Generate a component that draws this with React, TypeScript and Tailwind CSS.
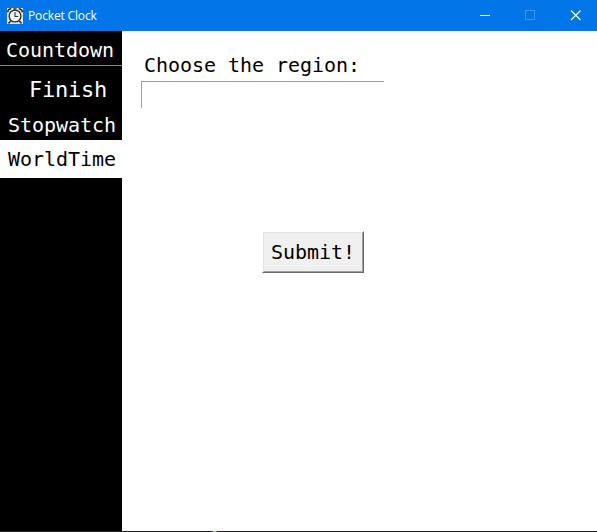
const mono = "font-['DejaVu_Sans_Mono',monospace] text-[20px] tracking-[-0.04px] whitespace-pre";

function ClockIcon() {
  return (
    <svg width="16" height="16" viewBox="0 0 16 16" className="shrink-0">
      <rect width="16" height="16" fill="#e4e4e4" />
      <circle cx="8" cy="8" r="5.9" fill="#f4f4f4" stroke="#2a2a2a" strokeWidth="1.3" />
      <path d="M.7 4.2Q.8 1 4.2.8M11.8.8Q15.2 1 15.3 4.2" fill="none" stroke="#2a2a2a" strokeWidth="1.6" />
      <path d="M6.5 1h3M3.7 13 1.5 15.5M12.3 13l2.2 2.5" stroke="#2a2a2a" strokeWidth="1.5" />
      <path d="M8 4v4.5h3.2" fill="none" stroke="#333" strokeWidth="1.1" />
    </svg>
  );
}

function TitleBar() {
  return (
    <header className="flex h-[31px] shrink-0 items-center bg-[#0275e8] pl-[7px] text-white">
      <ClockIcon />
      <span className="ml-[5px] grow font-['Open_Sans',sans-serif] text-[12px] leading-[16px] tracking-[-0.15px]">
        Pocket Clock
      </span>
      <svg width="130" height="31" viewBox="467 0 130 31" fill="none">
        <path d="M480 15.5h10" stroke="#fff" />
        <rect x="525.5" y="10.5" width="9" height="9" stroke="#3a93ee" />
        <path d="M571 10.5l9.5 9.5M580.5 10.5l-9.5 9.5" stroke="#fff" strokeWidth="1.1" />
      </svg>
    </header>
  );
}

export default function App() {
  return (
    <div className="flex h-[532px] w-[597px] flex-col overflow-hidden bg-white text-black">
      <TitleBar />
      <div className="flex grow">
        <nav className={`flex w-[122px] shrink-0 flex-col bg-black text-white ${mono}`}>
          <div className="h-[35px] border-b border-[#8a8a8a] pl-[6px] leading-[38px]">Countdown</div>
          <div className="h-[42px] pl-[29px] text-[22px] leading-[47px] tracking-[-0.25px]">Finish</div>
          <div className="h-[32px] pl-[8px] leading-[34px]">Stopwatch</div>
          <div className="h-[38px] bg-white pl-[8px] leading-[38px] text-black">WorldTime</div>
        </nav>
        <main className="flex grow flex-col pt-[20px] pl-[19px]">
          <label className={`block h-[30px] pl-[3px] leading-[28px] ${mono}`}>Choose the region:</label>
          <input aria-label="Region" className="block h-[27px] w-[243px] border-t border-l border-[#a0a0a0] outline-none" />
          <button className={`mt-[123px] ml-[121px] flex h-[42px] w-[102px] items-center border border-t-white border-r-[#696969] border-b-[#696969] border-l-white ${mono}`}>
            <span className="flex h-[40px] w-[100px] items-center border border-t-[#e3e3e3] border-r-[#a0a0a0] border-b-[#a0a0a0] border-l-[#e3e3e3] bg-[#f0f0f0] pl-[7px]">
              Submit!
            </span>
          </button>
        </main>
      </div>
      <footer className="flex h-px shrink-0 bg-[#202024]">
        <div className="ml-[212px] h-px w-px bg-[#31588a]" />
        <div className="h-px w-[4px] bg-[#b4b0a4]" />
      </footer>
    </div>
  );
}
